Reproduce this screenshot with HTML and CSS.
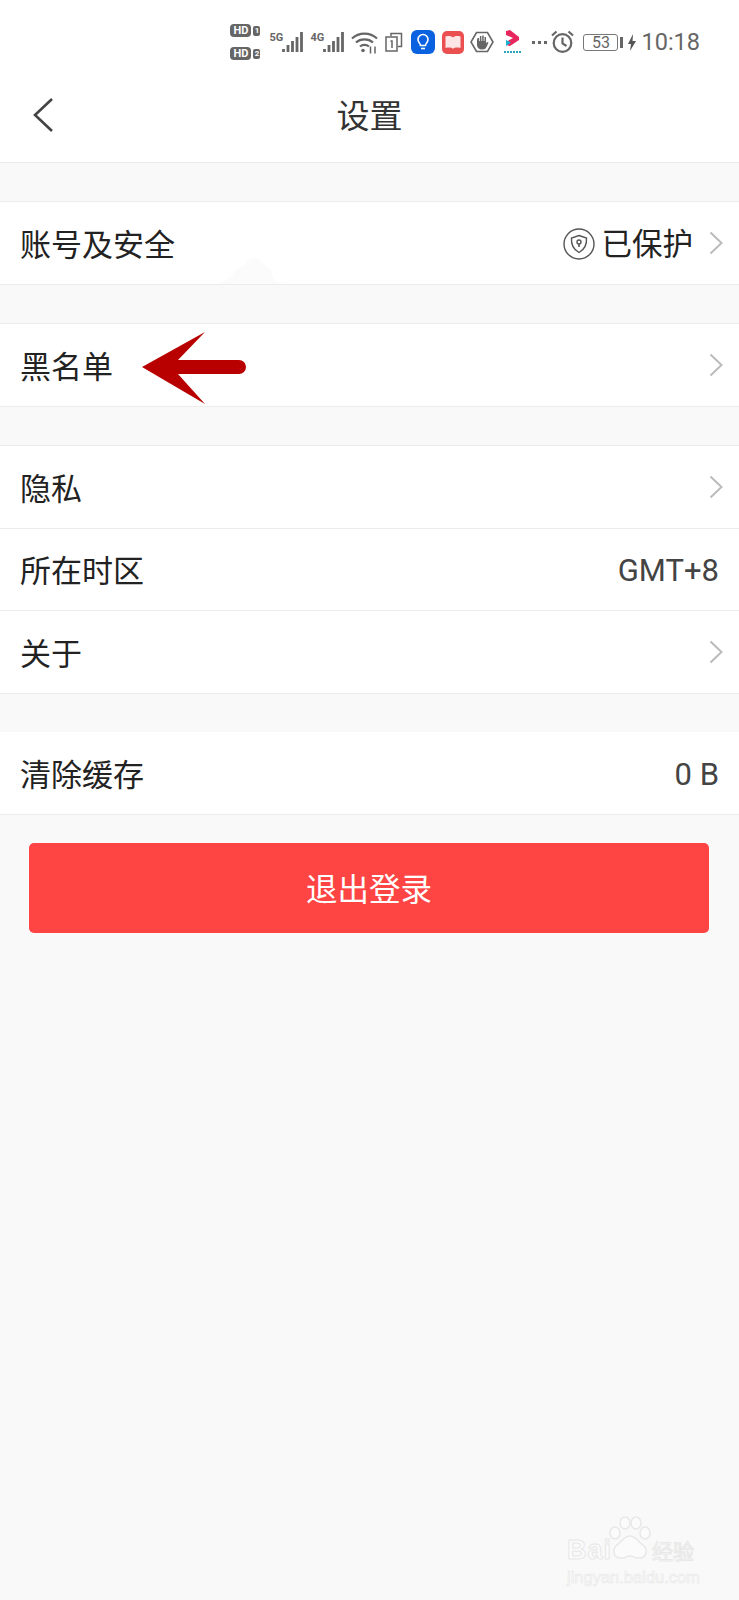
FILE: index.html
```html
<!DOCTYPE html>
<html lang="zh-CN">

<head>
    <meta charset="UTF-8">
    <meta name="viewport" content="width=device-width, initial-scale=1.0">
    <title>设置</title>
    <link rel="stylesheet" href="styles.css">
</head>

<body>
    <div class="status-bar">
        <div class="hd-stack">
            <div class="hd-line"><span class="hd-pill">HD</span><span class="hd-num">1</span></div>
            <div class="hd-line"><span class="hd-pill">HD</span><span class="hd-num">2</span></div>
        </div>
        <div class="net net-first">
            <span class="net-label">5G</span>
            <svg width="21" height="22" viewBox="0 0 21 22"><path d="M1.500 21v-3M6 21v-7M10.500 21v-11M15 21v-15M19.500 21v-20" stroke="#666" stroke-width="2.800" fill="none"/></svg>
        </div>
        <div class="net">
            <span class="net-label">4G</span>
            <svg width="21" height="22" viewBox="0 0 21 22"><path d="M1.500 21v-3M6 21v-7M10.500 21v-11M15 21v-15M19.500 21v-20" stroke="#666" stroke-width="2.800" fill="none"/></svg>
        </div>
        <svg class="icon-wifi" width="27" height="24" viewBox="0 0 27 24" fill="none" stroke="#666" stroke-width="2.200">
            <path d="M1 8.500c7-6.500 18-6.500 25 0M5 12.500c4.500-4.200 12.500-4.200 17 0M9 16.500c2.500-2.200 6.500-2.200 9 0"/>
            <circle cx="12" cy="20.500" r="1.800" fill="#666" stroke="none"/>
            <path d="M19.500 16.500v7M24 16.500v7" stroke-width="1.500"/>
        </svg>
        <svg class="icon-copy" width="18" height="20" viewBox="0 0 18 20" fill="none" stroke="#666" stroke-width="1.500">
            <path d="M6 4V1.500h10.500v13H13"/>
            <rect x="1" y="5" width="11" height="14"/>
            <path d="M5.500 9h1.500v7"/>
        </svg>
        <svg class="icon-app" width="24" height="24" viewBox="0 0 24 24">
            <rect width="24" height="24" rx="6" fill="#0b62e0"/>
            <path d="M9.500 15.500c0-2-2.500-3-2.500-6a5 5 0 0 1 10 0c0 3-2.500 4-2.500 6z" fill="none" stroke="#fff" stroke-width="1.600"/>
            <path d="M10 18.500h4" stroke="#fff" stroke-width="1.600"/>
        </svg>
        <svg class="icon-app-sm" width="22" height="23" viewBox="0 0 22 23">
            <rect width="22" height="23" rx="5" fill="#ea5050"/>
            <path d="M3.500 5.500c3-.8 5.500-.5 7.500 1 2-1.500 4.500-1.800 7.500-1v11.500c-3-.8-6.500-.5-7.500 1-1-1.500-4.500-1.800-7.500-1z" fill="#fde6e6"/>
        </svg>
        <svg class="icon-hand" width="24" height="22" viewBox="0 0 24 22">
            <path d="M6.500 1.500h11L23 11l-5.500 9.500h-11L1 11z" fill="none" stroke="#666" stroke-width="1.600"/>
            <path d="M7 9v5c0 2.500 2 4.500 5 4.500s4-1 5-3.500l1.500-3.500-1.400-.6-1.100 1.700V6h-1.500v4h-.8V4.500h-1.500V10h-.8V5h-1.500v5h-.8V7h-1.500z" fill="#666"/>
        </svg>
        <svg class="icon-tv" width="18" height="28" viewBox="0 0 18 28">
            <path d="M2 3l4-1 9 7v3l-9 6-4-1 0-3 7-4-7-3z" fill="#e8265e"/>
            <path d="M2 12l5 2.500-5 3.500z" fill="#16b3cf"/>
            <path d="M0 24h18" stroke="#29a3b8" stroke-width="2" stroke-dasharray="2 1"/>
        </svg>
        <span class="dots"><i></i><i></i><i></i></span>
        <svg class="icon-alarm" width="23" height="24" viewBox="0 0 23 24" fill="none" stroke="#666" stroke-width="2.200">
            <circle cx="11.500" cy="13" r="8.800"/>
            <path d="M11.500 7.500V13.500l4 2.500"/>
            <path d="M1 5.500L5.500 1.500M22 5.500L17.500 1.500"/>
        </svg>
        <div class="battery"><span class="battery-num">53</span></div>
        <span class="battery-tip"></span>
        <svg class="icon-bolt" width="8" height="17" viewBox="0 0 8 17"><path d="M5 0L0 10h3l-1 7 6-10H4.500z" fill="#555"/></svg>
        <span class="clock">10:18</span>
    </div>

    <header class="title-bar">
        <svg class="back" width="22" height="36" viewBox="0 0 22 36"><path d="M20 2L3 18l17 16" fill="none" stroke="#444" stroke-width="2.600"/></svg>
        <h1>设置</h1>
    </header>

    <section class="group">
        <div class="row">
            <span class="label">账号及安全</span>
            <div class="row-right">
                <svg class="shield" width="32" height="32" viewBox="0 0 32 32" fill="none" stroke="#555" stroke-width="1.400">
                    <circle cx="16" cy="16" r="15"/>
                    <path d="M16 7.500l7.500 2.500c.5 6.500-2 11.500-7.500 14.500-5.500-3-8-8-7.500-14.500z"/>
                    <circle cx="16" cy="14" r="2"/>
                    <path d="M16 16v3" stroke-width="1.600"/>
                </svg>
                <span class="value-cn">已保护</span>
                <svg class="chevron" width="14" height="24" viewBox="0 0 14 24"><path d="M1.500 1.500L12.500 12 1.500 22.500" fill="none" stroke="#bbb" stroke-width="2"/></svg>
            </div>
        </div>
    </section>

    <section class="group">
        <div class="row">
            <span class="label">黑名单</span>
            <svg class="chevron" width="14" height="24" viewBox="0 0 14 24"><path d="M1.500 1.500L12.500 12 1.500 22.500" fill="none" stroke="#bbb" stroke-width="2"/></svg>
        </div>
    </section>

    <section class="group">
        <div class="row row-line row-tall">
            <span class="label">隐私</span>
            <svg class="chevron" width="14" height="24" viewBox="0 0 14 24"><path d="M1.500 1.500L12.500 12 1.500 22.500" fill="none" stroke="#bbb" stroke-width="2"/></svg>
        </div>
        <div class="row row-line row-text">
            <span class="label">所在时区</span>
            <span class="value">GMT+8</span>
        </div>
        <div class="row">
            <span class="label">关于</span>
            <svg class="chevron" width="14" height="24" viewBox="0 0 14 24"><path d="M1.500 1.500L12.500 12 1.500 22.500" fill="none" stroke="#bbb" stroke-width="2"/></svg>
        </div>
    </section>

    <section class="group group-last">
        <div class="row row-text">
            <span class="label">清除缓存</span>
            <span class="value">0 B</span>
        </div>
    </section>

    <button class="logout">退出登录</button>

    <!-- annotation drawn over the screenshot -->
    <svg class="arrow" width="106" height="72" viewBox="0 0 106 72">
        <path d="M0 35L63 0 36 28H97a7 7 0 0 1 0 14H36l27 30z" fill="#b80000"/>
    </svg>

    <svg class="ghost-mark" width="90" height="30" viewBox="0 0 90 30">
        <path d="M0 30c10-2 14-6 18-10 3-6 9-6 12-10 4-6 10-8 14-4 4 3 8 6 12 10 2 6 1 10 6 12 6 2 14 2 20 4z" fill="#fbfbfb"/>
    </svg>

    <div class="watermark">
        <div class="wm-top">
            <span class="wm-bai">Bai</span>
            <svg class="wm-paw" width="42" height="48" viewBox="0 0 42 48" fill="#fbfbfb" stroke="#e8e8e8" stroke-width="1.500">
                <ellipse cx="6" cy="17" rx="5" ry="6"/>
                <ellipse cx="16" cy="7" rx="5" ry="6"/>
                <ellipse cx="27" cy="7" rx="5" ry="6"/>
                <ellipse cx="36" cy="17" rx="5" ry="6"/>
                <path d="M21 20c6 0 8 6 13 9 6 5 3 14-5 13-4 0-5-2-8-2s-4 2-8 2c-8 1-11-8-5-13 5-3 7-9 13-9z"/>
            </svg>
            <span class="wm-cn">经验</span>
        </div>
        <div class="wm-url">jingyan.baidu.com</div>
    </div>
</body>

</html>
```

FILE: styles.css
```css
body {
    margin: 0;
    padding: 0;
    position: relative;
    min-height: 1600px;
    background-color: #f9f9f9;
    color: #222;
    font-family: "Noto Sans CJK SC", Roboto, sans-serif;
}

/* Status bar */
.status-bar {
    height: 70px;
    padding-top: 14px;
    padding-right: 39px;
    box-sizing: border-box;
    display: flex;
    align-items: center;
    justify-content: flex-end;
    background-color: #fff;
    color: #666;
}

.hd-stack {
    display: flex;
    flex-direction: column;
    gap: 10px;
}

.hd-line {
    display: flex;
    align-items: center;
    gap: 2px;
}

.hd-pill {
    width: 21px;
    height: 13px;
    border-radius: 4px;
    background-color: #666;
    color: #fff;
    font: bold 11px/13px Roboto, sans-serif;
    text-align: center;
}

.hd-num {
    width: 7px;
    height: 10px;
    border-radius: 2px;
    background-color: #666;
    color: #fff;
    font: bold 8px/10px Roboto, sans-serif;
    text-align: center;
}

.net {
    display: flex;
    align-items: flex-end;
    margin-left: 7px;
    width: 34px;
}

.net-first {
    margin-left: 9px;
}

.net-label {
    align-self: flex-start;
    font: bold 11px/12px Roboto, sans-serif;
    width: 13px;
    margin-top: 1px;
}

.icon-wifi {
    margin-left: 7px;
}

.icon-copy {
    margin-left: 7px;
}

.icon-app {
    margin-left: 8px;
}

.icon-app-sm {
    margin-left: 7px;
}

.icon-hand {
    margin-left: 6px;
}

.icon-tv {
    margin-left: 10px;
}

.dots {
    display: flex;
    gap: 3px;
    margin-left: 10px;
}

.dots i {
    width: 3px;
    height: 3px;
    background-color: #666;
}

.icon-alarm {
    margin-left: 4px;
}

.battery {
    width: 35px;
    height: 17px;
    margin-left: 9px;
    border: 1px solid #777;
    border-radius: 3px;
    box-sizing: border-box;
    text-align: center;
}

.battery-num {
    display: block;
    font: 16px/15px Roboto, sans-serif;
    color: #666;
}

.battery-tip {
    width: 3px;
    height: 11px;
    margin-left: 2px;
    background-color: #666;
}

.icon-bolt {
    margin-left: 5px;
}

.clock {
    margin-left: 5px;
    font: 23.500px/30px Roboto, sans-serif;
    color: #666;
}

/* Title bar */
.title-bar {
    position: relative;
    height: 92px;
    display: flex;
    align-items: center;
    justify-content: center;
    background-color: #fff;
    border-bottom: 1px solid #ececec;
}

.title-bar h1 {
    margin: 0 0 5px;
    font-size: 33px;
    font-weight: 400;
    color: #333;
}

.back {
    position: absolute;
    left: 32px;
    top: 27px;
}

/* Settings list */
.group {
    margin-top: 38px;
    background-color: #fff;
    border-top: 1px solid #ececec;
    border-bottom: 1px solid #ececec;
}

.group-last {
    border-top: none;
}

.row {
    height: 82px;
    padding: 0 16px 0 20px;
    display: flex;
    align-items: center;
    justify-content: space-between;
    font-size: 31px;
    box-sizing: border-box;
}

.row-line {
    border-bottom: 1px solid #ececec;
}

.row-tall {
    height: 83px;
}

.row-text {
    padding-right: 20px;
}

.row-right {
    display: flex;
    align-items: center;
}

.label {
    margin-bottom: 2px;
}

.value {
    margin-top: 2px;
    font-family: Roboto, sans-serif;
    font-size: 31px;
    color: #444;
}

.shield {
    margin-top: 2px;
}

.value-cn {
    margin: 0 16px 2px 7px;
    font-size: 30.500px;
    color: #222;
}

/* Logout */
.logout {
    display: block;
    width: 680px;
    height: 90px;
    margin: 28px 0 0 29px;
    padding: 0 0 3px;
    border: none;
    border-radius: 5px;
    background-color: #ff4444;
    color: #fff;
    font-family: "Noto Sans CJK SC", sans-serif;
    font-size: 31.500px;
    cursor: pointer;
}

/* Overlays */
.arrow {
    position: absolute;
    left: 142px;
    top: 332px;
}

.ghost-mark {
    position: absolute;
    left: 215px;
    top: 254px;
}

.watermark {
    position: absolute;
    left: 567px;
    top: 1520px;
    width: 135px;
    color: #fbfbfb;
}

.wm-top {
    display: flex;
    align-items: flex-end;
    height: 44px;
}

.wm-bai {
    font: bold 27px/28px "Liberation Sans", sans-serif;
    -webkit-text-stroke: 1px #e8e8e8;
    letter-spacing: 1px;
}

.wm-paw {
    margin: 0 1px 0 -3px;
}

.wm-cn {
    font-size: 21px;
    line-height: 28px;
    -webkit-text-stroke: 1px #e8e8e8;
}

.wm-url {
    margin-top: 4px;
    font: 16.500px/18px "Liberation Sans", sans-serif;
    -webkit-text-stroke: 0.6px #e8e8e8;
    white-space: nowrap;
}
```
